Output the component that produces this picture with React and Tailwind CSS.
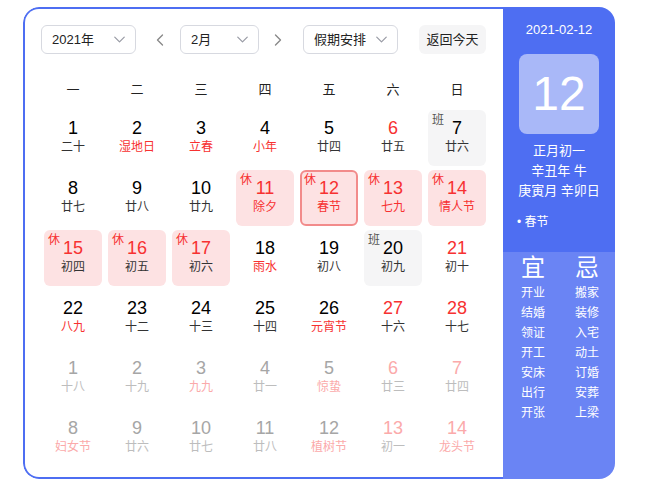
import { ChevronDown, ChevronLeft, ChevronRight } from 'lucide-react';

const font = { fontFamily: '"Liberation Sans", "Noto Sans CJK SC", sans-serif' };

// d: day, l: lunar, nr: red number, lr: red lunar, tag: 休/班, o: other month
const days = [
  { d: 1, l: '二十' }, { d: 2, l: '湿地日', lr: true }, { d: 3, l: '立春', lr: true }, { d: 4, l: '小年', lr: true },
  { d: 5, l: '廿四' }, { d: 6, l: '廿五', nr: true }, { d: 7, l: '廿六', tag: '班' },
  { d: 8, l: '廿七' }, { d: 9, l: '廿八' }, { d: 10, l: '廿九' }, { d: 11, l: '除夕', nr: true, lr: true, tag: '休' },
  { d: 12, l: '春节', nr: true, lr: true, tag: '休', today: true }, { d: 13, l: '七九', nr: true, lr: true, tag: '休' },
  { d: 14, l: '情人节', nr: true, lr: true, tag: '休' },
  { d: 15, l: '初四', nr: true, tag: '休' }, { d: 16, l: '初五', nr: true, tag: '休' }, { d: 17, l: '初六', nr: true, tag: '休' },
  { d: 18, l: '雨水', lr: true }, { d: 19, l: '初八' }, { d: 20, l: '初九', tag: '班' }, { d: 21, l: '初十', nr: true },
  { d: 22, l: '八九', lr: true }, { d: 23, l: '十二' }, { d: 24, l: '十三' }, { d: 25, l: '十四' },
  { d: 26, l: '元宵节', lr: true }, { d: 27, l: '十六', nr: true }, { d: 28, l: '十七', nr: true },
  { d: 1, l: '十八', o: true }, { d: 2, l: '十九', o: true }, { d: 3, l: '九九', o: true, lr: true }, { d: 4, l: '廿一', o: true },
  { d: 5, l: '惊蛰', o: true, lr: true }, { d: 6, l: '廿三', o: true, nr: true }, { d: 7, l: '廿四', o: true, nr: true },
  { d: 8, l: '妇女节', o: true, lr: true }, { d: 9, l: '廿六', o: true }, { d: 10, l: '廿七', o: true }, { d: 11, l: '廿八', o: true },
  { d: 12, l: '植树节', o: true, lr: true }, { d: 13, l: '初一', o: true, nr: true }, { d: 14, l: '龙头节', o: true, nr: true, lr: true },
];

const yi = ['开业', '结婚', '领证', '开工', '安床', '出行', '开张'];
const ji = ['搬家', '装修', '入宅', '动土', '订婚', '安葬', '上梁'];

function Select({ label, width }) {
  return (
    <div className={`${width} h-[29px] flex items-center justify-between pl-[10px] pr-[6px] border border-[#d7d9e0] rounded-[6px] text-[13px] text-[#222]`}>
      <span>{label}</span>
      <ChevronDown className="w-[19px] h-[19px] text-[#9a9ca6]" strokeWidth={1.6} />
    </div>
  );
}

function Cell({ c }) {
  let box = 'border-2 border-transparent';
  if (c.today) box = 'border-2 border-[#f28b8b] bg-[#fde2e3]';
  else if (c.tag === '休') box = 'border-2 border-transparent bg-[#fde2e3]';
  else if (c.tag === '班') box = 'border-2 border-transparent bg-[#f5f5f6]';

  let num = 'text-black';
  if (c.o) num = c.nr ? 'text-[#fbaaaa]' : 'text-[#a6a6a6]';
  else if (c.nr) num = 'text-[#f73131]';

  let lun = 'text-[#333]';
  if (c.o) lun = c.lr ? 'text-[#fbaaaa]' : 'text-[#bdbdbd]';
  else if (c.lr) lun = 'text-[#f73131]';

  return (
    <div className={`relative mx-[3px] my-[2px] h-[56px] rounded-[6px] flex flex-col items-center pt-[5px] ${box}`}>
      {c.tag && (
        <span className={`absolute left-[2px] top-[0px] text-[12px] leading-[16px] ${c.tag === '休' ? 'text-[#f73131]' : 'text-[#555]'}`}>
          {c.tag}
        </span>
      )}
      <span className={`text-[18px] leading-[22px] ${num}`}>{c.d}</span>
      <span className={`text-[12px] leading-[16px] ${lun}`}>{c.l}</span>
    </div>
  );
}

export default function App() {
  return (
    <div className="bg-white w-[649px] h-[490px] pt-[7px] pl-[23px]" style={font}>
      <div className="w-[592px] h-[472px] rounded-[16px] overflow-hidden flex">
        {/* calendar */}
        <div className="w-[480px] pt-[16px] pl-[16px] border-2 border-r-0 border-[#4e6ef2] rounded-l-[16px]">
          <div className="flex items-center h-[29px]">
            <Select label="2021年" width="w-[95px]" />
            <ChevronLeft className="w-[20px] h-[20px] ml-[14px] mr-[10px] text-[#888]" strokeWidth={1.6} />
            <Select label="2月" width="w-[79px]" />
            <ChevronRight className="w-[20px] h-[20px] ml-[9px] mr-[15px] text-[#888]" strokeWidth={1.6} />
            <Select label="假期安排" width="w-[95px]" />
            <div className="ml-[21px] w-[67px] h-[29px] rounded-[6px] bg-[#f5f5f6] flex items-center justify-center text-[13px] text-[#222]">
              返回今天
            </div>
          </div>
          <div className="grid grid-cols-[repeat(7,64px)] mt-[18px] h-[36px] items-center text-[13px] text-[#222]">
            {['一', '二', '三', '四', '五', '六', '日'].map((w) => (
              <div key={w} className="text-center">{w}</div>
            ))}
          </div>
          <div className="grid grid-cols-[repeat(7,64px)]">
            {days.map((c, i) => (
              <Cell key={i} c={c} />
            ))}
          </div>
        </div>

        {/* side panel */}
        <div className="flex-1 flex flex-col text-white">
          <div className="bg-[#4e6ef2] h-[245px] flex flex-col items-center pt-[14px]">
            <div className="text-[13px] leading-[18px]">2021-02-12</div>
            <div className="mt-[15px] w-[80px] h-[80px] rounded-[8px] bg-[#a9b8f8] flex items-center justify-center text-[48px] leading-none">
              12
            </div>
            <div className="mt-[7px] text-[13px] leading-[20px] text-center">
              <div>正月初一</div>
              <div>辛丑年 牛</div>
              <div>庚寅月 辛卯日</div>
            </div>
            <div className="self-start ml-[14px] mt-[13px] text-[12px] leading-[16px]">• 春节</div>
          </div>
          <div className="flex-1 bg-[#6a84f4] flex justify-center gap-[30px] pt-[1px] pl-[2px]">
            {[['宜', yi], ['忌', ji]].map(([t, list]) => (
              <div key={t} className="flex flex-col items-center">
                <div className="text-[24px] leading-[30px]">{t}</div>
                {list.map((s) => (
                  <div key={s} className="text-[12px] leading-[20px]">{s}</div>
                ))}
              </div>
            ))}
          </div>
        </div>
      </div>
    </div>
  );
}
